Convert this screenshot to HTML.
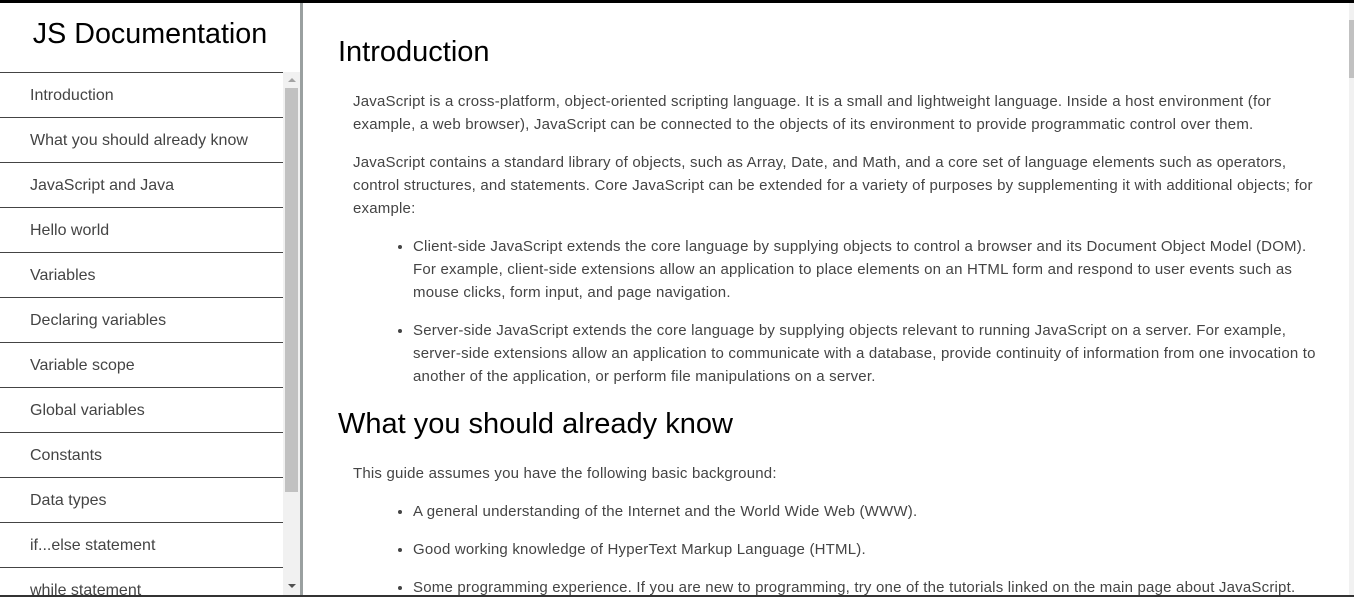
<!DOCTYPE html>
<html><head><meta charset="utf-8"><style>
*{box-sizing:border-box;margin:0;padding:0}
html,body{width:1354px;height:597px;overflow:hidden;background:#fff;font-family:"Liberation Sans",Arial,sans-serif}
.topb{position:absolute;left:0;top:0;width:1354px;height:3px;background:#000}
.botb{position:absolute;left:0;top:595px;width:1354px;height:2px;background:#333}
#nav{position:absolute;left:0;top:3px;width:300px;height:592px;overflow:hidden}
#nav h1{position:absolute;left:0;width:300px;top:15px;text-align:center;font-weight:normal;font-size:28.7px;color:#000}
#nav ul{position:absolute;top:69px;left:0;width:283px;list-style:none}
#nav li{height:45px;border-top:1px solid #444;font-size:16px;color:#444;padding-left:30px;line-height:46px}
.sb{position:absolute;left:283px;top:69px;width:17px;height:523px;background:#f1f1f1}
.sb .th{position:absolute;left:2px;top:16px;width:13px;height:404px;background:#c1c1c1}
.sb .up{position:absolute;left:5px;top:6px;border:4px solid transparent;border-bottom:4px solid #a3a3a3;border-top:0}
.sb .dn{position:absolute;left:5px;bottom:7px;border:4px solid transparent;border-top:4px solid #505050;border-bottom:0}
.vline{position:absolute;left:300px;top:3px;width:3px;height:592px;background:#9aa0a0}
#main{position:absolute;left:303px;top:3px;width:1046px;height:592px;overflow:hidden;padding-left:35px;padding-right:29px}
#main h2{font-weight:normal;font-size:29px;color:#000;line-height:35px;margin-bottom:20px}
#main h2.f{margin-top:31.5px}
#main h2.s{margin-top:19px}
#main p,#main li{font-size:15px;line-height:23px;color:#444;margin-bottom:15px;letter-spacing:0.2px}
#main p{padding-left:15px}
#main ul{padding-left:75px}
.rs{position:absolute;left:1349px;top:3px;width:5px;height:592px;background:#f1f1f1}
.rs div{position:absolute;left:0;top:17px;width:5px;height:58px;background:#c1c1c1}
</style></head><body>
<div class="topb"></div>
<div id="nav"><h1>JS Documentation</h1>
<ul><li>Introduction</li><li>What you should already know</li><li>JavaScript and Java</li><li>Hello world</li><li>Variables</li><li>Declaring variables</li><li>Variable scope</li><li>Global variables</li><li>Constants</li><li>Data types</li><li>if...else statement</li><li>while statement</li></ul>
<div class="sb"><div class="up"></div><div class="th"></div><div class="dn"></div></div>
</div>
<div class="vline"></div>
<div id="main">
<h2 class="f">Introduction</h2>
<p>JavaScript is a cross-platform, object-oriented scripting language. It is a small and lightweight language. Inside a host environment (for example, a web browser), JavaScript can be connected to the objects of its environment to provide programmatic control over them.</p>
<p>JavaScript contains a standard library of objects, such as Array, Date, and Math, and a core set of language elements such as operators, control structures, and statements. Core JavaScript can be extended for a variety of purposes by supplementing it with additional objects; for example:</p>
<ul><li>Client-side JavaScript extends the core language by supplying objects to control a browser and its Document Object Model (DOM). For example, client-side extensions allow an application to place elements on an HTML form and respond to user events such as mouse clicks, form input, and page navigation.</li>
<li>Server-side JavaScript extends the core language by supplying objects relevant to running JavaScript on a server. For example, server-side extensions allow an application to communicate with a database, provide continuity of information from one invocation to another of the application, or perform file manipulations on a server.</li></ul>
<h2 class="s">What you should already know</h2>
<p>This guide assumes you have the following basic background:</p>
<ul><li>A general understanding of the Internet and the World Wide Web (WWW).</li><li>Good working knowledge of HyperText Markup Language (HTML).</li><li>Some programming experience. If you are new to programming, try one of the tutorials linked on the main page about JavaScript.</li></ul>
</div>
<div class="rs"><div></div></div>
<div class="botb"></div>
</body></html>
